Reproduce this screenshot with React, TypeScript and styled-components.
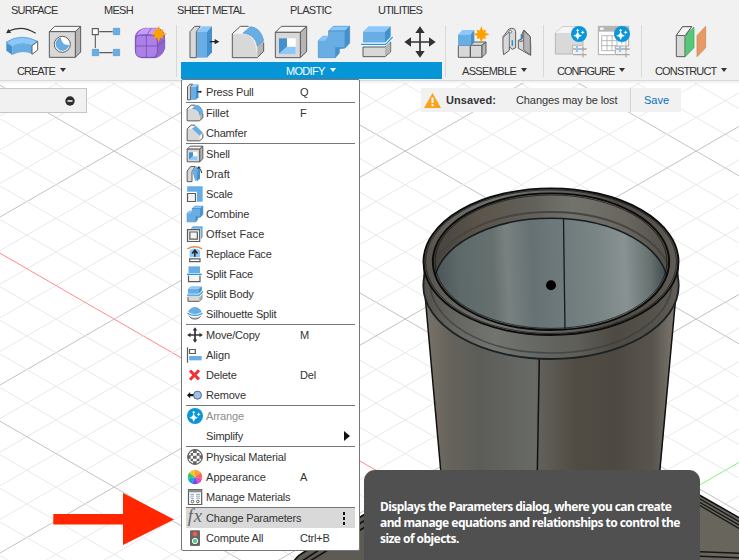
import React from 'react';
import styled, { createGlobalStyle } from 'styled-components';

const Global = createGlobalStyle`
  * { box-sizing: border-box; }
  html, body { margin: 0; padding: 0; overflow: hidden; }
  body { font-family: "Liberation Sans", Arial, sans-serif; font-size: 11px; color: #333; }
`;

const Frame = styled.div`
  position: relative;
  width: 739px;
  height: 560px;
  overflow: hidden;
  background: #fff;
  display: flex;
  flex-direction: column;
`;
const Canvas = styled.svg`
  position: absolute;
  inset: 0;
  display: block;
`;
const Header = styled.header`
  position: relative;
  z-index: 2;
  height: 83px;
  display: flex;
  flex-direction: column;
  flex: none;
  background: linear-gradient(#f1f1f1 80px, #d9d9d9 80px, #d9d9d9 81px, #f3f3f3 81px);
`;
const Tabs = styled.nav`
  height: 22px;
  display: flex;
  padding-left: 11px;
`;
const Tab = styled.span<{ $w: number; $track: number }>`
  width: ${(p) => p.$w}px;
  flex: none;
  white-space: nowrap;
  font-size: 11px;
  line-height: 20px;
  letter-spacing: ${(p) => p.$track}px;
`;
const Ribbon = styled.div`
  display: flex;
  height: 58px;
`;
const Group = styled.section<{ $w: number }>`
  position: relative;
  width: ${(p) => p.$w}px;
  flex: none;
  display: flex;
  flex-direction: column;
`;
const Tools = styled.div<{ $pad: number }>`
  display: flex;
  gap: 11px;
  height: 40px;
  padding: 4px 0 0 ${(p) => p.$pad}px;
`;
const Divider = styled.i<{ $left?: number; $right?: number }>`
  width: 1px;
  flex: none;
  margin: 3px ${(p) => p.$right ?? 0}px 3px ${(p) => p.$left ?? 0}px;
  background: #d8d8d8;
`;
const GroupLabel = styled.div<{ $pad: number; $track: number; $active?: boolean }>`
  display: flex;
  align-items: center;
  gap: 5px;
  height: 17px;
  padding-left: ${(p) => p.$pad}px;
  padding-top: 1px;
  white-space: nowrap;
  letter-spacing: ${(p) => p.$track}px;
  color: ${(p) => (p.$active ? '#fff' : '#333')};
  background: ${(p) => (p.$active ? '#0696d7' : 'transparent')};
`;
const Caret = styled.i`
  border: 3px solid transparent;
  border-top: 4px solid currentColor;
  border-bottom: 0;
  margin-top: -3px;
`;
const Svg = styled.svg<{ $size: number }>`
  width: ${(p) => p.$size}px;
  height: ${(p) => p.$size}px;
  flex: none;
  display: block;
  overflow: visible;
  & * { vector-effect: non-scaling-stroke; }
`;

const Stage = styled.main`
  position: relative;
  z-index: 1;
  display: flex;
  align-items: flex-start;
  padding-top: 5px;
`;
const BrowserBar = styled.div`
  width: 87px;
  height: 25px;
  border: 1px solid #c6c6c6;
  border-left: 0;
  background: #f1f1f1;
  display: flex;
  justify-content: flex-end;
  align-items: center;
  padding-right: 11px;
`;
const Notice = styled.div`
  margin-left: 334px;
  height: 24px;
  width: 260px;
  background: #f1f1f1;
  display: flex;
  align-items: center;
  white-space: nowrap;
`;
const Warn = styled.svg`
  width: 17px;
  height: 15px;
  margin-left: 3px;
  flex: none;
`;
const NoticeTitle = styled.b`
  width: 70px;
  margin-left: 5px;
  letter-spacing: 0.07px;
`;
const NoticeText = styled.span`
  width: 114px;
  letter-spacing: -0.1px;
`;
const NoticeAction = styled.a`
  height: 24px;
  line-height: 24px;
  border-left: 1px solid #d2d2d2;
  padding-left: 13px;
  color: #0672ba;
`;

const Menu = styled.div`
  position: absolute;
  left: 0;
  top: 57px;
  width: 179px;
  height: 472px;
  padding: 2px 4px 0;
  background: #fff;
  border: 1px solid #777;
  border-radius: 2px;
`;
const Row = styled.div<{ $hot?: boolean; $dim?: boolean }>`
  display: flex;
  align-items: center;
  height: 20px;
  padding-left: 1px;
  white-space: nowrap;
  letter-spacing: -0.19px;
  color: ${(p) => (p.$dim ? '#8c8c8c' : '#333')};
  background: ${(p) => (p.$hot ? '#d9d9d9' : 'transparent')};
`;
const IconSlot = styled.span`
  width: 16px;
  height: 16px;
  margin-right: 3px;
  flex: none;
`;
const RowText = styled.span<{ $w: number; $track?: number }>`
  width: ${(p) => p.$w}px;
  flex: none;
  letter-spacing: ${(p) => p.$track ?? -0.19}px;
`;
const Rule = styled.div`
  height: 1px;
  background: #777;
`;
const Submenu = styled.i`
  border: 5px solid transparent;
  border-left: 6px solid #111;
  border-right: 0;
  margin-left: 44px;
`;
const Dots = styled.i`
  display: flex;
  flex-direction: column;
  gap: 2px;
  margin-left: 41px;
  &::before, &::after, & > b { content: ''; width: 2px; height: 3px; background: #111; }
`;
const Tip = styled.aside`
  position: absolute;
  z-index: 3;
  left: 364px;
  top: 470px;
  width: 336px;
  height: 102px;
  border-radius: 11px;
  background: #505050;
  color: #fff;
  padding: 29px 0 0 16px;
  font: 700 12px/16px "Noto Sans", "Open Sans", sans-serif;
  letter-spacing: -0.56px;
  white-space: pre;
`;

const B = '#69ade5';
const BL = '#8cc8fb';
const BD = '#4490cc';
const G = '#d8d8d8';
const GD = '#b5b5b5';
const W = '#f5f5f5';
const K = '#5c5c5c';

const star = (cx: number, cy: number, r: number) => {
  const pts: string[] = [];
  for (let i = 0; i < 16; i++) {
    const rad = i % 2 ? r * 0.5 : i % 4 ? r * 0.8 : r;
    const a = (i * Math.PI) / 8;
    pts.push(`${(cx + rad * Math.sin(a)).toFixed(1)},${(cy - rad * Math.cos(a)).toFixed(1)}`);
  }
  return <polygon points={pts.join(' ')} fill="#ffa200" stroke="none" />;
};
const spark = (cx: number, cy: number, r: number) => (
  <g transform={`translate(${cx} ${cy}) scale(${r / 24})`} stroke="none">
    <circle r="24" fill="#0a97d9" />
    <path d="M-4 -8L0 1L9 5L0 9L-4 18L-8 9L-17 5L-8 1Z" fill="#fff" />
    <path d="M-4 -16L-2 -13L1 -11L-2 -9L-4 -6L-6 -9L-9 -11L-6 -13Z" fill="#fff" />
    <path d="M11 -11L13 -7L17 -5L13 -3L11 1L9 -3L5 -5L9 -7Z" fill="#fff" />
  </g>
);
const sliders = (
  <g stroke="#a8a8a8" strokeWidth="1.3">
    <path d="M54 69H95M54 86H95M84 61V77M84 80V94" />
    <path d="M66 60V78" stroke="#8cc8fb" strokeWidth="2" />
  </g>
);

const art: Record<string, React.ReactNode> = {
  revolve: (
    <g>
      <path d="M0 49Q44 20 95 46L78 59Q45 47 19 62Z" fill={BL} stroke={BD} strokeWidth=".7" />
      <path d="M1 50L19 63V87L1 74Z" fill={BD} />
      <path d="M19 63Q48 48 78 59V84Q48 71 19 87Z" fill={B} />
      <path d="M78 59L95 46V72L78 85Z" fill="#fff" stroke={K} />
      <path d="M8 15Q50-4 89 22" fill="none" stroke="#333" strokeWidth="1.200" />
      <path d="M0 22L7 9 16 20Z" fill="#333" />
    </g>
  ),
  hole: (
    <g stroke={K}>
      <path d="M1 17L17 1H95L79 17Z" fill={W} />
      <path d="M79 17L95 1V78L79 94Z" fill={GD} />
      <path d="M1 17H79V94H1Z" fill={G} />
      <circle cx="40" cy="55" r="24" fill="#fff" />
      <path d="M34 36A19 19 0 1 0 59 58Q38 60 34 36Z" fill={B} stroke={BD} strokeWidth=".7" />
    </g>
  ),
  pattern: (
    <g stroke={K} strokeWidth="1.100">
      <path d="M22 17H62M10 28V66M22 80H62" />
      <path d="M1 8H19V26H1Z" fill="#fff" />
      <path d="M64 7H83V26H64ZM1 70H20V89H1ZM64 70H83V89H64Z" fill={B} stroke={BD} strokeWidth=".6" />
    </g>
  ),
  form: (
    <g stroke="#744cae" strokeWidth=".8">
      <path d="M1 31Q5 12 30 7H68Q90 12 89 40V67Q82 90 62 95H20Q2 91 1 71Z" fill="#9265d0" />
      <path d="M5 28Q17 5 36 7H70L62 28Q32 20 5 28Z" fill="#c69cff" stroke="none" />
      <path d="M2 39Q5 27 18 28H53Q66 30 67 45V78Q66 94 51 94H18Q2 93 2 78Z" fill="#ad80e8" />
      <path d="M34 27V94M2 60H67L89 43M35 27L49 7M66 28L80 18" fill="none" />
      {star(71, 24, 25)}
    </g>
  ),
  press: (
    <g>
      <path d="M3 17L17 1H34L22 17V95H3Z" fill={G} stroke={K} />
      <path d="M24 17L39 1H69L54 17Z" fill={BL} />
      <path d="M54 17L69 1V79L54 95Z" fill={BD} />
      <path d="M24 17H54V95H24Z" fill={B} />
      <path d="M62 47H80" stroke="#222" strokeWidth="1.300" />
      <path d="M77 39L91 47 77 55Z" fill="#222" />
    </g>
  ),
  fillet: (
    <g>
      <path d="M1 23L25 1H58L95 44V76L76 95H1Z" fill={W} />
      <path d="M1 23H31Q75 23 76 95H1Z" fill={G} stroke="#eee" strokeWidth=".8" />
      <path d="M76 61L95 43V76L76 95Z" fill={GD} />
      <path d="M33 21L55 2Q85 4 95 43L76 61Q70 25 33 21Z" fill={B} stroke={BD} strokeWidth=".6" />
      <path d="M50 1H25L1 23V95H76L95 76V50" fill="none" stroke={K} />
    </g>
  ),
  chamfer: (
    <g>
      <path d="M1 23L25 1H50L95 46V78L76 95H1Z" fill={W} />
      <path d="M1 23H30L76 65V95H1Z" fill={G} />
      <path d="M30 22L52 3 95 45 76 64Z" fill={B} />
      <path d="M48 1H25L1 23V95H76L95 78V52" fill="none" stroke={K} />
    </g>
  ),
  shell: (
    <g stroke={K}>
      <path d="M1 19L19 1H95L76 19Z" fill={W} />
      <path d="M76 19L95 1V77L76 95Z" fill={GD} />
      <path d="M1 19H76V95H1Z" fill={G} />
      <path d="M12 37H62V84H12Z" fill="#fff" stroke="none" />
      <path d="M12 37H36V62L12 84Z" fill={BD} stroke="none" />
      <path d="M12 84L36 62H62V84Z" fill={BL} stroke="none" />
    </g>
  ),
  combine: (
    <g stroke={BD} strokeWidth=".7">
      <path d="M32 15L46 1H95L81 15Z" fill={BL} />
      <path d="M81 15L95 1V51L81 66V66L64 68V81L52 95V66Z" fill={BD} />
      <path d="M1 44L14 31H32V15H81V65H52V95H1Z" fill={B} />
      <path d="M1 44L14 31H32L20 44Z" fill={BL} stroke="none" />
    </g>
  ),
  splitbody: (
    <g>
      <path d="M6 17L23 1H89L72 17Z" fill={BL} />
      <path d="M72 17L89 1V33L72 50Z" fill={BD} />
      <path d="M6 17H72V50H6Z" fill={B} />
      <path d="M6 63H72L89 48V78L72 92H6Z" fill={G} stroke={K} />
      <path d="M72 64L88 50V77L72 91Z" fill={GD} />
      <path d="M0 55H74L95 33" fill="none" stroke="#fff" strokeWidth="3" />
      <path d="M0 55H74L95 33" fill="none" stroke="#2299df" strokeWidth="1.200" />
    </g>
  ),
  move: (
    <g>
      <path d="M48 14V82M14 48H82" stroke="#333" strokeWidth="1.700" />
      <path d="M48 1L62 21H34ZM48 95L62 75H34ZM1 48L21 34V62ZM95 48L75 34V62Z" fill="#333" />
    </g>
  ),
  component: (
    <g>
      <path d="M1 58H37V94H1ZM37 58L49 48H83L72 58V94H37Z" fill={G} stroke={K} />
      <path d="M72 58L84 48V82L72 94Z" fill={GD} stroke={K} />
      <path d="M37 58H72" stroke={K} />
      <path d="M0 26L13 12H49L37 26Z" fill={BL} />
      <path d="M37 26L49 12V47L37 59Z" fill={BD} />
      <path d="M0 26H37V59H0Z" fill={B} />
      {star(70, 25, 25)}
    </g>
  ),
  joint: (
    <g stroke={K}>
      <path d="M6 32L24 9Q42 2 44 17V65L34 70 25 62V73L8 86Q5 75 6 32Z" fill={G} />
      <path d="M25 20V64M7 34L24 18" fill="none" strokeWidth=".8" />
      <circle cx="28" cy="17" r="4" fill="#fff" strokeWidth=".8" />
      <path d="M64 21L69 12 88 32Q90 64 89 88L52 67V43L64 38Z" fill={G} />
      <path d="M52 43Q60 51 68 43V71L88 87V32L68 14V43" fill={GD} strokeWidth=".8" />
      <path d="M34 43V59M61 25V40" stroke="#1690e0" strokeWidth="1.400" />
    </g>
  ),
  configure: (
    <g>
      <path d="M1 21L23 2H73L84 18V58H52V84H1Z" fill="#d9d9d9" stroke="#aaa" strokeWidth=".8" />
      <path d="M1 21L23 2H73L58 21Z" fill="#f5f5f5" />
      {sliders}
      {spark(72, 24, 24)}
    </g>
  ),
  table: (
    <g>
      <path d="M1 1H92V60H52V86H1Z" fill="#fff" stroke="#aaa" />
      <path d="M1 1H92V17H1Z" fill="#b5b5b5" />
      <path d="M6 8H17" stroke="#fff" strokeWidth="2" />
      <path d="M11 29H84V58M11 29V74H53M11 44H84M11 59H56M27 29V74M42 29V74M57 29V61M71 29V54" fill="none" stroke="#aaa" strokeWidth=".8" />
      {sliders}
      {spark(72, 24, 24)}
    </g>
  ),
  construct: (
    <g>
      <path d="M4 28L23 2H50L30 33V92H4Z" fill={G} stroke={K} />
      <path d="M4 28L23 2H50L30 29Z" fill={W} stroke={K} />
      <path d="M31 31L57 3V65L31 92Z" fill="#59c77a" stroke="#3da75f" strokeWidth=".7" />
      <path d="M66 29L92 1V65L66 92Z" fill="#e79a66" stroke="#cf824f" strokeWidth=".7" />
    </g>
  ),
  draft: (
    <g>
      <path d="M1 30L22 3H50L30 34V94H1Z" fill={G} stroke={K} />
      <path d="M32 32L54 3 78 20 68 76 49 90Z" fill={B} />
      <path d="M64 28L78 15V74L58 94" fill={BD} />
      <path d="M69 7Q83 16 89 42M66 19L67 5 80 9" fill="none" stroke="#222" />
    </g>
  ),
  scale: (
    <g>
      <path d="M1 2H94V94H60V35H1Z" fill={B} />
      <path d="M3 45H51V93H3Z" fill="#f3f3f3" stroke={K} strokeWidth="1.200" />
    </g>
  ),
  offset: (
    <g>
      <path d="M22 16L35 2H94V68L83 80V16Z" fill={B} />
      <path d="M3 22H76V93H3ZM17 36H62V79H17Z" fill="#f3f3f3" stroke={K} strokeWidth="1.200" />
    </g>
  ),
  replace: (
    <g>
      <path d="M2 18Q46-9 92 18" fill="none" stroke="#e98a54" strokeWidth="1.300" />
      <path d="M16 25Q46 5 78 25V67H16Z" fill={BL} />
      <path d="M47 64V29M31 45L47 25 63 45" fill="none" stroke="#222" strokeWidth="1.500" />
      <path d="M16 77H78V94H16Z" fill="#fff" stroke={K} strokeWidth="1.200" />
    </g>
  ),
  splitface: (
    <g>
      <path d="M9 2H78V42H9Z" fill={B} />
      <path d="M9 57V94H78V57" fill="#f5f5f5" stroke={K} strokeWidth="1.200" />
      <path d="M0 50H88" stroke="#1b96e8" strokeWidth="1.300" />
    </g>
  ),
  silhouette: (
    <g>
      <path d="M10 50A39 39 0 0 0 85 50Z" fill={G} stroke={K} />
      <path d="M8 42A40 40 0 0 1 87 42Q48 58 8 42Z" fill={B} stroke={BD} strokeWidth=".6" />
      <path d="M2 43Q48 72 93 43" fill="none" stroke="#fff" strokeWidth="3" />
      <path d="M2 43Q48 70 93 43" fill="none" stroke="#1b96e8" strokeWidth="1.100" />
    </g>
  ),
  align: (
    <g>
      <path d="M3 2V94" stroke={K} strokeWidth="1.200" />
      <path d="M15 15H50V39H15Z" fill="#fff" stroke={K} strokeWidth="1.200" />
      <path d="M13 54H88V80H13Z" fill={B} />
    </g>
  ),
  del: <path d="M18 22L72 74M72 20L18 76" stroke="#f0333b" strokeWidth="3" />,
  remove: (
    <g>
      <path d="M0 49L19 30V42H45V56H19V68Z" fill="#111" />
      <circle cx="63" cy="49" r="24" fill="#a4bfe4" stroke="#496a94" />
    </g>
  ),
  arrange: spark(48, 48, 48),
  physical: (
    <g>
      <circle cx="48" cy="48" r="44" fill="#fff" />
      <path
        d="M36 6H58V24H36ZM22 24H36V40H22ZM58 24H75V40H58ZM36 40H58V58H36ZM6 38H22V58H6ZM75 38H91V58H75ZM22 58H36V74H22ZM58 58H75V74H58ZM36 74H58V91H36Z"
        fill="#666"
      />
      <circle cx="48" cy="48" r="44" fill="none" stroke={K} strokeWidth="1.200" />
    </g>
  ),
  appearance: (
    <g>
      {['#ffa13b', '#ff6a4b', '#e84ab8', '#7149f5', '#14a8ce', '#31c86c', '#ffc02f'].map((c, i, a) => {
        const t = (n: number) => (n * 2 * Math.PI) / a.length;
        const pt = (n: number) => `${48 + 44 * Math.sin(t(n))} ${48 - 44 * Math.cos(t(n))}`;
        return <path key={c} d={`M48 48L${pt(i)}A44 44 0 0 1 ${pt(i + 1)}Z`} fill={c} />;
      })}
    </g>
  ),
  manage: (
    <g>
      <path d="M9 4H88V93H9Z" fill="#fff" stroke={K} strokeWidth="1.200" />
      <path d="M9 4H88V20H9Z" fill="#8c8c8c" />
      <path d="M20 32H42M20 43H42M54 32H78M54 43H78M20 55H42M54 55H78" stroke="#8da4bf" />
      <circle cx="33" cy="75" r="8" fill="#fff" stroke={K} />
      <circle cx="65" cy="75" r="8" fill="#fff" stroke={K} />
    </g>
  ),
  fx: (
    <text x="4" y="74" fontFamily="Liberation Serif, serif" fontStyle="italic" fontSize="112" letterSpacing="6" fill="#666">
      fx
    </text>
  ),
  compute: (
    <g>
      <rect x="18" y="1" width="60" height="95" rx="7" fill="#666" />
      <circle cx="48" cy="25" r="14" fill="#f25a55" />
      <circle cx="48" cy="66" r="16" fill="#51cc83" stroke="#fff" />
    </g>
  ),
};

const Icon = ({ name, size = 32 }: { name: string; size?: number }) => (
  <Svg viewBox="0 0 96 96" $size={size}>{art[name]}</Svg>
);

type Item = { icon?: string; text: string; key?: string; dim?: boolean; hot?: boolean; sub?: boolean; track?: number };
const sections: Item[][] = [
  [{ icon: 'press', text: 'Press Pull', key: 'Q' }],
  [{ icon: 'fillet', text: 'Fillet', key: 'F', track: -0.1 }, { icon: 'chamfer', text: 'Chamfer' }],
  [
    { icon: 'shell', text: 'Shell', track: -0.1 },
    { icon: 'draft', text: 'Draft', track: 0 },
    { icon: 'scale', text: 'Scale', track: -0.15 },
    { icon: 'combine', text: 'Combine', track: -0.1 },
    { icon: 'offset', text: 'Offset Face', track: 0.17 },
    { icon: 'replace', text: 'Replace Face', track: -0.19 },
    { icon: 'splitface', text: 'Split Face' },
    { icon: 'splitbody', text: 'Split Body' },
    { icon: 'silhouette', text: 'Silhouette Split' },
  ],
  [
    { icon: 'move', text: 'Move/Copy', key: 'M' },
    { icon: 'align', text: 'Align', track: -0.1 },
    { icon: 'del', text: 'Delete', key: 'Del' },
    { icon: 'remove', text: 'Remove' },
  ],
  [{ icon: 'arrange', text: 'Arrange', dim: true }, { text: 'Simplify', sub: true }],
  [
    { icon: 'physical', text: 'Physical Material' },
    { icon: 'appearance', text: 'Appearance', key: 'A', track: 0.07 },
    { icon: 'manage', text: 'Manage Materials' },
  ],
  [{ icon: 'fx', text: 'Change Parameters', hot: true }, { icon: 'compute', text: 'Compute All', key: 'Ctrl+B' }],
];

const S = 0.5773;
const Grid = () => {
  const lines: React.ReactNode[] = [];
  for (let i = -22; i <= 32; i++) {
    const major = i % 5 === 0;
    const c = major ? '#c2c2c2' : '#e9e9e9';
    const d = 253.2 + i * 33.6;
    const u = 385 + i * 33.6;
    lines.push(<line key={`d${i}`} x1="0" y1={d} x2="739" y2={d + 739 * S} stroke={i === 0 ? '#ff8a8a' : c} />);
    lines.push(<line key={`u${i}`} x1="0" y1={u} x2="739" y2={u - 739 * S} stroke={i === 15 ? '#84ef84' : c} />);
  }
  return <g>{lines}</g>;
};

const stops = (list: [number, string][]) => list.map(([o, c]) => <stop key={o} offset={o} stopColor={c} />);

const Scene = () => (
  <Canvas width="739" height="560" viewBox="0 0 739 560">
    <defs>
      <linearGradient id="body">
        {stops([[0, '#7a746a'], [0.1, '#66635c'], [0.22, '#5c5d58'], [0.44, '#686a65'], [0.455, '#62605a'], [0.6, '#504b43'], [0.75, '#4d4942'], [0.9, '#59554e'], [1, '#817c73']])}
      </linearGradient>
      <linearGradient id="rim">
        {stops([[0, '#55514b'], [0.12, '#656560'], [0.28, '#72746f'], [0.45, '#656762'], [0.6, '#5f5e59'], [0.75, '#4e4a43'], [0.9, '#55514b'], [1, '#625e57']])}
      </linearGradient>
      <linearGradient id="back">
        {stops([[0, '#44413c'], [0.2, '#5b544a'], [0.42, '#62605a'], [0.58, '#73736d'], [0.8, '#69665f'], [1, '#4f4b45']])}
      </linearGradient>
      <linearGradient id="inside" gradientUnits="userSpaceOnUse" x1="436" x2="667" y1="280" y2="270">
        {stops([[0, '#4c5557'], [0.1, '#5d6869'], [0.25, '#66706f'], [0.31, '#78817f'], [0.42, '#667173'], [0.55, '#6e7a7b'], [0.7, '#798485'], [0.82, '#899292'], [0.93, '#65706f'], [1, '#3d474a']])}
      </linearGradient>
      <clipPath id="hole"><ellipse cx="551" cy="261.7" rx="118" ry="68" /></clipPath>
      <clipPath id="front"><path d="M415 263H690V375H415Z" /></clipPath>
    </defs>
    <Grid />
    <path d="M294 561Q298 555 306 551L370 510H694L745 521V561Z" fill="#5e5b54" />
    <path d="M694 492L745 521V561H694Z" fill="#68655d" />
    <path d="M294 561Q298 555 306 551L370 511M302 561L370 517M310 561L370 524M694 492L745 521" fill="none" stroke="#111" strokeWidth="1.600" />
    <path d="M694 495.500L745 525M694 499L745 528.500M694 502L745 532M694 551.500L745 553.500M694 556L745 558" fill="none" stroke="#161616" strokeWidth="1.300" />
    <path d="M423.500 275L425.500 300 442 485H659L675.500 300 678.500 275Z" fill="url(#body)" />
    <path d="M425.400 299L442 485M675.600 299L658.500 485M539.300 358L537.200 480" fill="none" stroke="#111" strokeWidth="1.500" />
    <ellipse cx="551" cy="285.500" rx="127.700" ry="73.500" fill="url(#rim)" />
    <path d="M423.300 261.600V285.500H678.700V261.600Z" fill="url(#rim)" />
    <ellipse cx="551" cy="285.500" rx="127.700" ry="73.500" fill="none" stroke="#1a2226" strokeWidth="1.800" clipPath="url(#front)" />
    <ellipse cx="551" cy="282.500" rx="121" ry="70.500" fill="none" stroke="#3b3d3c" strokeWidth="1.500" opacity=".75" clipPath="url(#front)" />
    <ellipse cx="551" cy="261.700" rx="127.500" ry="73.300" fill="url(#rim)" stroke="#0d0d0d" strokeWidth="1.900" />
    <g clipPath="url(#hole)">
      <rect x="430" y="190" width="245" height="150" fill="url(#back)" />
      <ellipse cx="551" cy="282.500" rx="121" ry="70.500" fill="none" stroke="#454542" strokeWidth="2" />
      <ellipse cx="551" cy="285.300" rx="117" ry="67" fill="url(#inside)" stroke="#151d20" strokeWidth="1.600" />
      <path d="M563.500 219L565 331" stroke="#151a1c" strokeWidth="1.300" />
    </g>
    <ellipse cx="551" cy="261.700" rx="125.500" ry="71.800" fill="none" stroke="#151515" strokeWidth=".7" />
    <ellipse cx="551" cy="261.700" rx="118.200" ry="68.300" fill="none" stroke="#0b0b0b" strokeWidth="1.900" />
    <ellipse cx="551" cy="261.700" rx="116" ry="66.700" fill="none" stroke="#111" strokeWidth=".7" />
    <circle cx="551" cy="285.300" r="5" fill="#000" />
    <path d="M53.300 514H123V493L174 519.500 123 545V524.500H53.300Z" fill="#ff2600" />
  </Canvas>
);

const tabs: [string, number, number][] = [
  ['SURFACE', 93, -0.78],
  ['MESH', 73, -0.7],
  ['SHEET METAL', 113, -0.7],
  ['PLASTIC', 88, -0.65],
  ['UTILITIES', 60, -0.8],
];

export default function App() {
  return (
    <Frame>
      <Global />
      <Scene />
      <Header>
        <Tabs>
          {tabs.map(([t, w, k]) => <Tab key={t} $w={w} $track={k}>{t}</Tab>)}
        </Tabs>
        <Ribbon>
          <Group $w={176}>
            <Tools $pad={6}>{['revolve', 'hole', 'pattern', 'form'].map((n) => <Icon key={n} name={n} />)}</Tools>
            <GroupLabel $pad={17} $track={-1}>CREATE<Caret /></GroupLabel>
          </Group>
          <Divider $right={4} />
          <Group $w={261}>
            <Tools $pad={8}>
              {['press', 'fillet', 'shell', 'combine', 'splitbody', 'move'].map((n) => <Icon key={n} name={n} />)}
            </Tools>
            <GroupLabel $pad={105} $track={-0.7} $active>MODIFY<Caret /></GroupLabel>
            <Menu>
              {sections.map((sec, i) => (
                <React.Fragment key={i}>
                  {i > 0 && <Rule />}
                  {sec.map((it) => (
                    <Row key={it.text} $hot={it.hot} $dim={it.dim}>
                      <IconSlot>{it.icon && <Icon name={it.icon} size={16} />}</IconSlot>
                      <RowText $w={it.hot ? 96 : 94} $track={it.track}>{it.text}</RowText>
                      {it.key}
                      {it.sub && <Submenu />}
                      {it.hot && <Dots><b /></Dots>}
                    </Row>
                  ))}
                </React.Fragment>
              ))}
            </Menu>
          </Group>
          <Divider $left={3} />
          <Group $w={97}>
            <Tools $pad={12}><Icon name="component" /><Icon name="joint" /></Tools>
            <GroupLabel $pad={16} $track={-0.65}>ASSEMBLE<Caret /></GroupLabel>
          </Group>
          <Divider />
          <Group $w={97}>
            <Tools $pad={11}><Icon name="configure" /><Icon name="table" /></Tools>
            <GroupLabel $pad={13} $track={-0.95}>CONFIGURE<Caret /></GroupLabel>
          </Group>
          <Divider />
          <Group $w={97}>
            <Tools $pad={33}><Icon name="construct" /></Tools>
            <GroupLabel $pad={13} $track={-0.85}>CONSTRUCT<Caret /></GroupLabel>
          </Group>
        </Ribbon>
      </Header>
      <Stage>
        <BrowserBar>
          <Svg viewBox="0 0 10 10" $size={10}>
            <circle cx="5" cy="5" r="4.700" fill="#2d2d2d" />
            <path d="M2.500 5H7.500" stroke="#fff" strokeWidth="1.500" />
          </Svg>
        </BrowserBar>
        <Notice>
          <Warn viewBox="0 0 17 15">
            <path d="M8.500 0L17 15H0Z" fill="#faa21b" />
            <path d="M8.500 4.500V10M8.500 11.300V13.300" stroke="#fff" strokeWidth="2" />
          </Warn>
          <NoticeTitle>Unsaved:</NoticeTitle>
          <NoticeText>Changes may be lost</NoticeText>
          <NoticeAction>Save</NoticeAction>
        </Notice>
      </Stage>
      <Tip>{'Displays the Parameters dialog, where you can create\nand manage equations and relationships to control the\nsize of objects.'}</Tip>
    </Frame>
  );
}
